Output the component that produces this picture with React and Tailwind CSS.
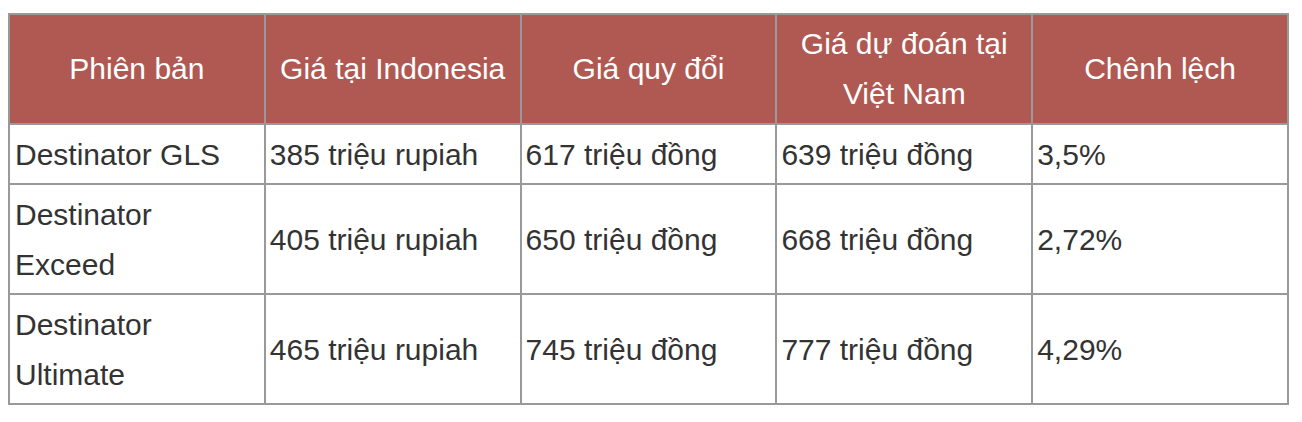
import React from 'react';

const headers = ['Phiên bản', 'Giá tại Indonesia', 'Giá quy đổi', 'Giá dự đoán tại Việt Nam', 'Chênh lệch'];

const rows = [
  ['Destinator GLS', '385 triệu rupiah', '617 triệu đồng', '639 triệu đồng', '3,5%'],
  ['Destinator Exceed', '405 triệu rupiah', '650 triệu đồng', '668 triệu đồng', '2,72%'],
  ['Destinator Ultimate', '465 triệu rupiah', '745 triệu đồng', '777 triệu đồng', '4,29%'],
];

const App = () => (
  <div className="min-h-screen bg-white pl-[8px] pt-[13px] font-['Liberation_Sans',Arial,sans-serif]">
    <table className="w-[1281px] table-fixed border-collapse border-2 border-[#999] text-[30px] leading-[50px]">
      <thead>
        <tr className="bg-[#b05952] text-white">
          {headers.map((h) => (
            <th key={h} className="border-2 border-[#999] px-[5px] py-[4px] text-center font-normal">
              {h}
            </th>
          ))}
        </tr>
      </thead>
      <tbody>
        {rows.map((row) => (
          <tr key={row[0]} className="text-[#333]">
            {row.map((cell, i) => (
              <td
                key={i}
                className={
                  i === 0
                    ? 'border-2 border-[#999] pt-[5px] pb-[3px] pl-[5px] pr-[14px] text-left align-middle'
                    : 'border-2 border-[#999] px-[4px] pt-[5px] pb-[3px] text-left align-middle'
                }
              >
                {cell}
              </td>
            ))}
          </tr>
        ))}
      </tbody>
    </table>
  </div>
);

export default App;
